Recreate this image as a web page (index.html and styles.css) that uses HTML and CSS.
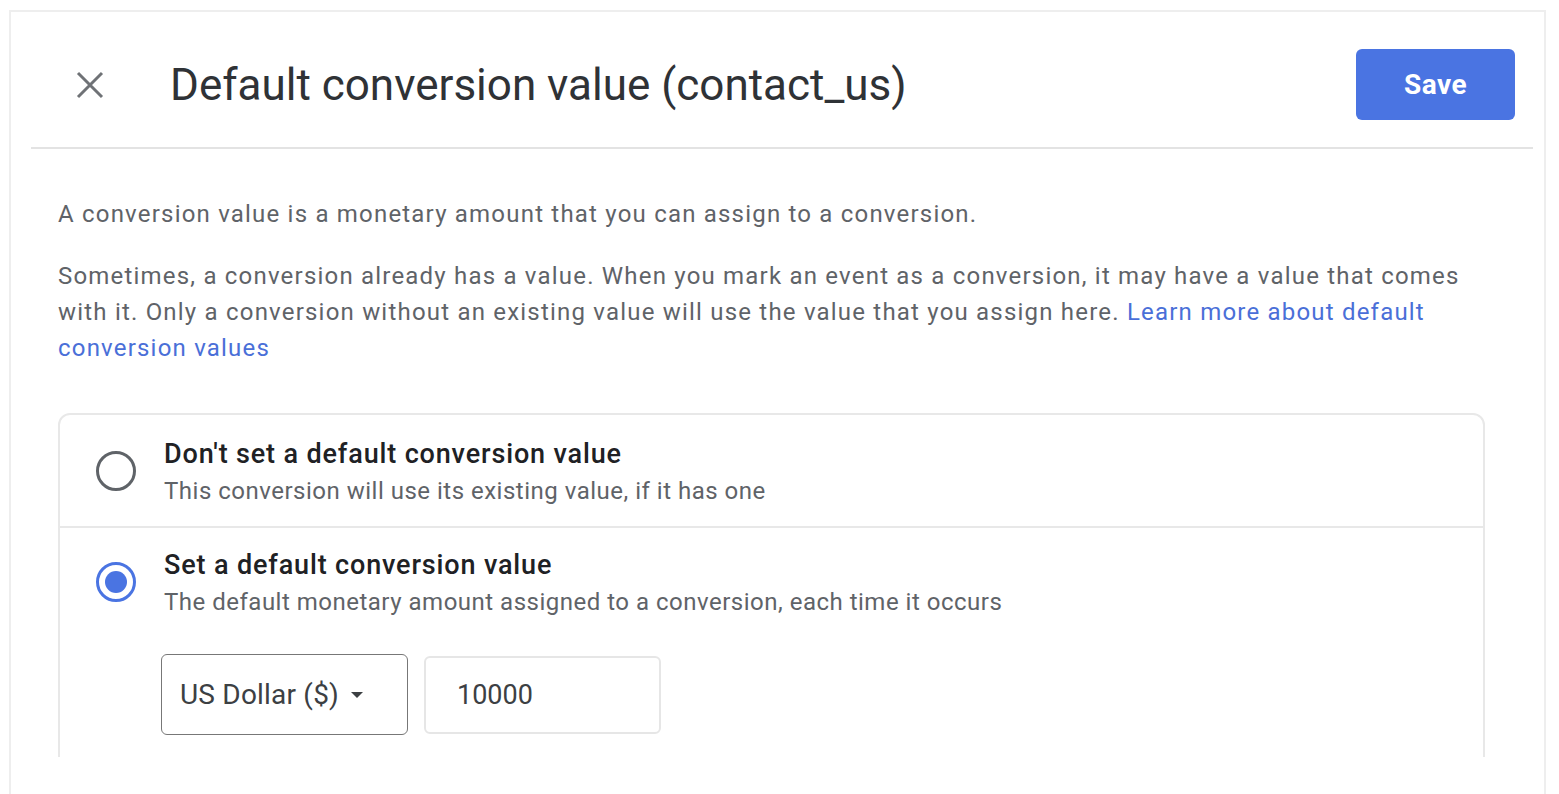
FILE: index.html
```html
<!DOCTYPE html>
<html lang="en">

<head>
    <meta charset="UTF-8">
    <meta name="viewport" content="width=device-width, initial-scale=1.0">
    <title>Default conversion value</title>
    <link rel="stylesheet" href="styles.css">
</head>

<body>
<div class="panel">
    <!-- Header with close, title and save -->
    <div class="header">
        <button class="close-btn" aria-label="Close">
            <svg width="30" height="30" viewBox="0 0 30 30">
                <path d="M3 3 L27 27 M27 3 L3 27" stroke="#6f7276" stroke-width="3" fill="none"/>
            </svg>
        </button>
        <h1 class="title">Default conversion value (contact_us)</h1>
        <button class="save-btn">Save</button>
    </div>

    <div class="content">
        <p class="intro">A conversion value is a monetary amount that you can assign to a conversion.</p>
        <p class="intro second">Sometimes, a conversion already has a value. When you mark an event as a conversion, it may have a value that comes with it. Only a conversion without an existing value will use the value that you assign here. <a href="#" class="link">Learn more about default conversion values</a></p>

        <!-- Options card -->
        <div class="options">
            <label class="option">
                <span class="radio"></span>
                <span class="option-text">
                    <span class="option-title">Don't set a default conversion value</span>
                    <span class="option-sub">This conversion will use its existing value, if it has one</span>
                </span>
            </label>
            <label class="option">
                <span class="radio checked"></span>
                <span class="option-text">
                    <span class="option-title">Set a default conversion value</span>
                    <span class="option-sub">The default monetary amount assigned to a conversion, each time it occurs</span>
                    <span class="controls">
                        <span class="currency">US Dollar ($) <span class="caret"></span></span>
                        <span class="amount">10000</span>
                    </span>
                </span>
            </label>
        </div>
    </div>
</div>
</body>

</html>
```

FILE: styles.css
```css
body {
    font-family: 'Roboto', sans-serif;
    background-color: #fff;
    margin: 0;
    padding: 0;
    color: #5f6368;
}

.panel {
    margin: 10px 13px 0 9px;
    height: 784px;
    border: 2px solid #eeeeee;
    border-bottom: none;
    box-sizing: border-box;
    overflow: hidden;
}

.header {
    display: flex;
    align-items: center;
    margin: 0 11px 0 20px;
    padding: 37px 18px 27px 44px;
    border-bottom: 2px solid #e3e3e3;
}

.close-btn {
    background: none;
    border: none;
    padding: 0;
    width: 30px;
    height: 30px;
    display: flex;
}

.title {
    flex: 1;
    margin: 0 0 0 65px;
    font-family: 'Roboto', sans-serif;
    font-weight: 400;
    font-size: 44px;
    color: #2f3236;
}

.save-btn {
    width: 159px;
    height: 71px;
    border: none;
    border-radius: 6px;
    background-color: #4a74e2;
    color: #fff;
    font-family: 'Roboto', sans-serif;
    font-weight: 700;
    font-size: 28px;
    letter-spacing: 0.5px;
}

.content {
    height: 608px;
    box-sizing: border-box;
    overflow: hidden;
    padding: 47px 59px 0 47px;
}

.intro {
    margin: 0;
    font-size: 24px;
    line-height: 36px;
    letter-spacing: 1.2px;
}

.intro.second {
    margin-top: 26px;
}

.link {
    color: #4a6fd8;
    text-decoration: none;
}

.options {
    margin-top: 47px;
    border: 2px solid #e8e8e8;
    border-radius: 12px;
}

.option {
    display: flex;
    align-items: flex-start;
    padding: 22px 0 18px 36px;
}

.option + .option {
    border-top: 2px solid #e8e8e8;
    padding-top: 20px;
    padding-bottom: 80px;
}

.radio {
    width: 40px;
    height: 40px;
    margin-top: 14px;
    border: 3px solid #5f6368;
    border-radius: 50%;
    box-sizing: border-box;
    flex-shrink: 0;
    position: relative;
}

.radio.checked {
    border-color: #4a74e2;
}

.radio.checked::after {
    content: '';
    position: absolute;
    left: 6px;
    top: 6px;
    width: 22px;
    height: 22px;
    border-radius: 50%;
    background-color: #4a74e2;
}

.option-text {
    display: flex;
    flex-direction: column;
    margin-left: 28px;
}

.option-title {
    font-size: 27px;
    font-weight: 500;
    line-height: 34px;
    letter-spacing: 0.85px;
    color: #202124;
}

.option-sub {
    font-size: 24px;
    line-height: 34px;
    letter-spacing: 0.5px;
    color: #5f6368;
    margin-top: 3px;
}

.controls {
    display: flex;
    align-items: center;
    gap: 16px;
    margin: 35px 0 0 -3px;
}

.currency {
    display: flex;
    align-items: center;
    width: 247px;
    height: 81px;
    box-sizing: border-box;
    padding-left: 18px;
    border: 1px solid #777;
    border-radius: 6px;
    font-size: 28px;
    letter-spacing: 0.2px;
    color: #3c4043;
}

.caret {
    margin-left: 12px;
    width: 0;
    height: 0;
    border-left: 6px solid transparent;
    border-right: 6px solid transparent;
    border-top: 6px solid #3c4043;
}

.amount {
    display: flex;
    align-items: center;
    width: 237px;
    height: 78px;
    box-sizing: border-box;
    padding-left: 31px;
    border: 2px solid #e6e6e6;
    border-radius: 6px;
    font-size: 27px;
    color: #3c4043;
}
```
